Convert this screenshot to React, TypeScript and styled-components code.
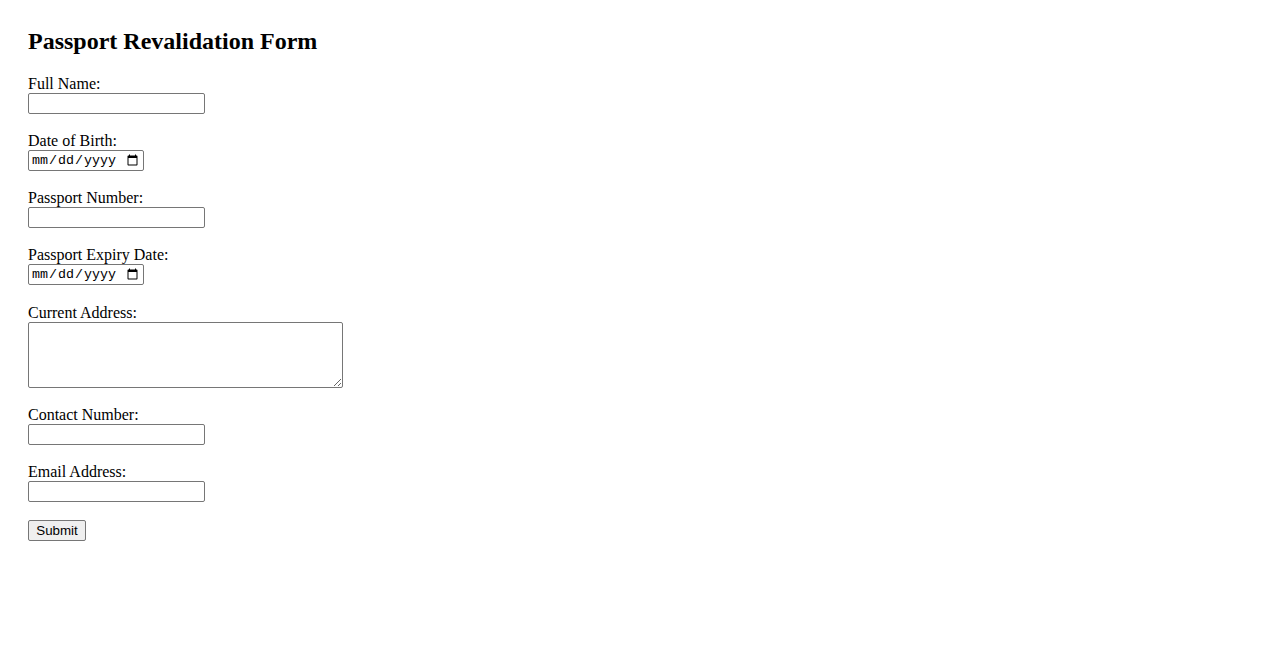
import React from 'react';
import styled, { createGlobalStyle } from 'styled-components';

const GlobalStyle = createGlobalStyle`
	html, body {
		margin: 0;
		padding: 0;
		background: #ffffff;
	}
	body {
		font-family: 'Liberation Serif', 'Times New Roman', serif;
		font-size: 16px;
		color: #000000;
	}
`;

const Page = styled.div`
	padding: 28px;
`;

const Title = styled.h2`
	margin: 0 0 20px;
	font-size: 24px;
	line-height: 27px;
	font-weight: bold;
`;

const Form = styled.form`
	display: flex;
	flex-direction: column;
	align-items: flex-start;
`;

const Field = styled.div<{ $after?: number }>`
	display: flex;
	flex-direction: column;
	align-items: flex-start;
	margin-bottom: ${(p) => p.$after ?? 18}px;
`;

const Label = styled.label`
	display: block;
	line-height: 18px;
`;

const Input = styled.input<{ $width?: number }>`
	box-sizing: border-box;
	width: ${(p) => p.$width ?? 177}px;
	height: 21px;
	margin: 0;
	padding: 1px 2px;
	border: 1px solid #767676;
	border-radius: 2px;
	font-family: 'Liberation Sans', Arial, sans-serif;
	font-size: 13.33px;
	background: #ffffff;
`;

const DateInput = styled(Input)`
	font-family: 'Liberation Mono', 'Courier New', monospace;
`;

const TextArea = styled.textarea`
	box-sizing: border-box;
	width: 315px;
	height: 66px;
	margin: 0;
	padding: 2px;
	border: 1px solid #767676;
	border-radius: 2px;
	font-family: 'Liberation Mono', monospace;
	font-size: 13.33px;
`;

const SubmitButton = styled.button`
	box-sizing: border-box;
	width: 58px;
	height: 21px;
	margin: 0;
	padding: 1px 6px;
	border: 1px solid #767676;
	border-radius: 2px;
	background: #efefef;
	font-family: 'Liberation Sans', Arial, sans-serif;
	font-size: 13.33px;
	color: #000000;
`;

const fields: { id: string; label: string; kind: 'text' | 'date' | 'area' | 'email' | 'tel'; after?: number }[] = [
	{ id: 'fullName', label: 'Full Name:', kind: 'text' },
	{ id: 'dob', label: 'Date of Birth:', kind: 'date' },
	{ id: 'passportNumber', label: 'Passport Number:', kind: 'text' },
	{ id: 'expiry', label: 'Passport Expiry Date:', kind: 'date', after: 19 },
	{ id: 'address', label: 'Current Address:', kind: 'area' },
	{ id: 'contact', label: 'Contact Number:', kind: 'tel' },
	{ id: 'email', label: 'Email Address:', kind: 'email' },
];

export default function App() {
	return (
		<Page>
			<GlobalStyle />
			<Title>Passport Revalidation Form</Title>
			<Form onSubmit={(e) => e.preventDefault()}>
				{fields.map((f) => (
					<Field key={f.id} $after={f.after}>
						<Label htmlFor={f.id}>{f.label}</Label>
						{f.kind === 'area' && <TextArea id={f.id} />}
						{f.kind === 'date' && <DateInput id={f.id} type="date" $width={116} />}
						{(f.kind === 'text' || f.kind === 'tel' || f.kind === 'email') && <Input id={f.id} type={f.kind} />}
					</Field>
				))}
				<SubmitButton type="submit">Submit</SubmitButton>
			</Form>
		</Page>
	);
}
